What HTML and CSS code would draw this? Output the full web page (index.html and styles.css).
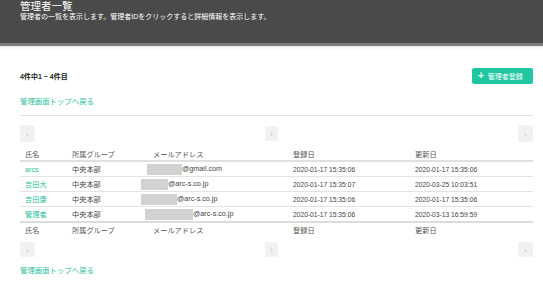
FILE: index.html
```html
<!DOCTYPE html>
<html lang="ja">
<head>
<meta charset="utf-8">
<title>管理者一覧</title>
<link rel="stylesheet" href="styles.css">
</head>
<body>
<header class="page-head">
  <h1 class="page-title">管理者一覧</h1>
  <p class="page-desc">管理者の一覧を表示します。管理者IDをクリックすると詳細情報を表示します。</p>
</header>
<main class="content">
  <div class="toolbar">
    <span class="count">4件中1 ~ 4件目</span>
    <a class="btn-add" href="#"><span class="plus">+</span>管理者登録</a>
  </div>
  <a class="back" href="#">管理画面トップへ戻る</a>
  <hr class="sep">
  <div class="pager">
    <span class="pg">‹</span>
    <span class="pg pg-num">1</span>
    <span class="pg">›</span>
  </div>
  <table class="list">
    <thead>
      <tr><th class="c1">氏名</th><th class="c2">所属グループ</th><th class="c3">メールアドレス</th><th class="c4">登録日</th><th class="c5">更新日</th></tr>
    </thead>
    <tbody>
      <tr><td><a href="#">arcs</a></td><td>中央本部</td><td class="mail"><span class="redact" style="margin-left:-6px;width:35px"></span>@gmail.com</td><td class="date">2020-01-17 15:35:06</td><td class="date">2020-01-17 15:35:06</td></tr>
      <tr><td><a href="#">吉田大</a></td><td>中央本部</td><td class="mail"><span class="redact" style="margin-left:-12px;width:27px"></span>@arc-s.co.jp</td><td class="date">2020-01-17 15:35:07</td><td class="date">2020-03-25 10:03:51</td></tr>
      <tr><td><a href="#">吉田康</a></td><td>中央本部</td><td class="mail"><span class="redact" style="margin-left:-12px;width:36px"></span>@arc-s.co.jp</td><td class="date">2020-01-17 15:35:06</td><td class="date">2020-01-17 15:35:06</td></tr>
      <tr><td><a href="#">管理者</a></td><td>中央本部</td><td class="mail"><span class="redact" style="margin-left:-8px;width:48px"></span>@arc-s.co.jp</td><td class="date">2020-01-17 15:35:06</td><td class="date">2020-03-13 16:59:59</td></tr>
    </tbody>
    <tfoot>
      <tr><th>氏名</th><th>所属グループ</th><th>メールアドレス</th><th>登録日</th><th>更新日</th></tr>
    </tfoot>
  </table>
  <div class="pager pager-bottom">
    <span class="pg">‹</span>
    <span class="pg pg-num">1</span>
    <span class="pg">›</span>
  </div>
  <a class="back back-bottom" href="#">管理画面トップへ戻る</a>
</main>
</body>
</html>
```
FILE: styles.css
```css
html, body {
  margin: 0;
  padding: 0;
  background: #fff;
}
body {
  font-family: "Liberation Sans", "Noto Sans CJK JP", sans-serif;
  color: #444;
  font-size: 7.2px;
}
a { text-decoration: none; color: #1fbf9d; }

.page-head {
  height: 43px;
  background: #4a4a4a;
  border-bottom: 3px solid #7c7c7c;
  box-shadow: 0 2px 2px rgba(0,0,0,0.08);
  padding: 0 20px;
  box-sizing: content-box;
  color: #fff;
}
.page-title {
  margin: 0;
  padding-top: 0;
  font-size: 10.5px;
  line-height: 12px;
  font-weight: normal;
}
.page-desc {
  margin: 0;
  font-size: 7px;
  line-height: 9px;
}

.content {
  padding: 22px 10px 0 20px;
  display: flex;
  flex-direction: column;
}
.toolbar {
  display: flex;
  justify-content: space-between;
  align-items: center;
  height: 16px;
}
.count {
  color: #222;
  font-size: 7px;
  font-weight: bold;
}
.btn-add {
  display: flex;
  align-items: center;
  gap: 4px;
  width: 61px;
  height: 16px;
  box-sizing: border-box;
  padding-left: 6px;
  background: #1ec7a2;
  border-radius: 2px;
  color: #fff;
  font-size: 7px;
}
.plus {
  font-size: 10px;
  font-weight: bold;
  line-height: 1;
}
.back {
  align-self: flex-start;
  margin-top: 13px;
  font-size: 7.4px;
  line-height: 10px;
}
.sep {
  width: 100%;
  margin: 8px 0 0;
  border: 0;
  border-top: 1px solid #e2e2e2;
}
.pager {
  display: flex;
  justify-content: space-between;
  align-items: center;
  margin-top: 9px;
  height: 17px;
}
.pg {
  width: 15px;
  height: 17px;
  background: #f1f1f1;
  border: 1px solid #f4f4f4;
  box-sizing: border-box;
  color: #aaa;
  font-size: 6px;
  display: flex;
  align-items: center;
  justify-content: center;
}
.pg-num { width: 13px; height: 15px; margin-right: 10px; color: #ccc; }

.list {
  width: 100%;
  border-collapse: collapse;
  margin-top: 5px;
}
.list th, .list td {
  height: 14px;
  padding: 0 5px;
  text-align: left;
  font-weight: normal;
  white-space: nowrap;
  color: #444;
}
.list th { color: #555; }
.list thead th { height: 13px; }
.list thead tr { border-bottom: 2px solid #e0e0e0; }
.list tbody tr { border-bottom: 1px solid #e4e4e4; }
.list tbody tr:last-child { border-bottom: 2px solid #dcdcdc; }
.list tfoot th { height: 14px; }
.c1 { width: 37px; }
.c2 { width: 71px; }
.c3 { width: 130px; }
.c4 { width: 112px; }
.list td a { color: #1fbf9d; }
.date { font-size: 6.7px; }
.redact {
  display: inline-block;
  height: 11px;
  vertical-align: middle;
  background: #d2d2d2;
}

.pager-bottom { margin-top: 5px; height: 15px; }
.pager-bottom .pg { height: 15px; }
.back-bottom { margin-top: 9px; }
```
